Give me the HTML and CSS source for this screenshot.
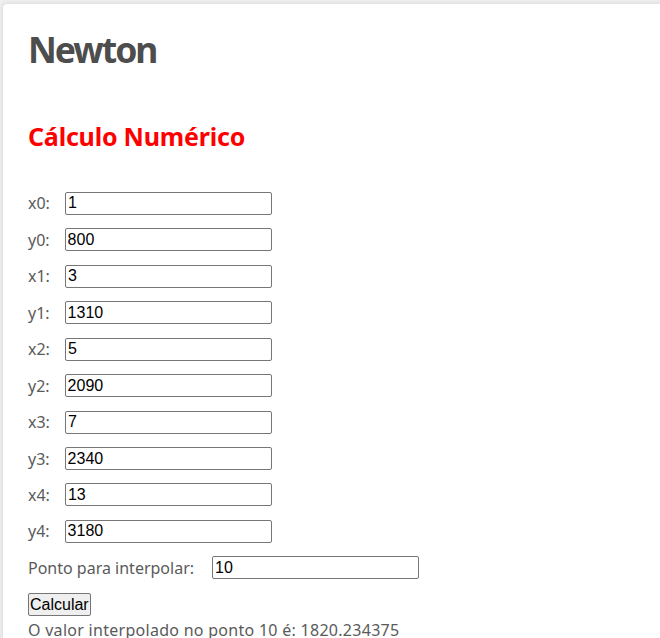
FILE: index.html
```html
<!DOCTYPE html>
<html lang="pt">
<head>
<meta charset="utf-8">
<title>Newton</title>
<link rel="stylesheet" href="styles.css">
</head>
<body>
<div class="card">
  <h1 class="title">Newton</h1>
  <h2 class="subtitle">Cálculo Numérico</h2>
  <form class="form">
    <div class="row"><label class="lbl">x0:</label><input class="field" type="text" value="1"></div>
    <div class="row"><label class="lbl">y0:</label><input class="field" type="text" value="800"></div>
    <div class="row"><label class="lbl">x1:</label><input class="field" type="text" value="3"></div>
    <div class="row"><label class="lbl">y1:</label><input class="field" type="text" value="1310"></div>
    <div class="row"><label class="lbl">x2:</label><input class="field" type="text" value="5"></div>
    <div class="row"><label class="lbl">y2:</label><input class="field" type="text" value="2090"></div>
    <div class="row"><label class="lbl">x3:</label><input class="field" type="text" value="7"></div>
    <div class="row"><label class="lbl">y3:</label><input class="field" type="text" value="2340"></div>
    <div class="row"><label class="lbl">x4:</label><input class="field" type="text" value="13"></div>
    <div class="row"><label class="lbl">y4:</label><input class="field" type="text" value="3180"></div>
    <div class="row"><label class="lbl lbl-wide">Ponto para interpolar:</label><input class="field" type="text" value="10"></div>
    <div class="actions"><button class="btn" type="button">Calcular</button></div>
  </form>
  <p class="result">O valor interpolado no ponto 10 é: 1820.234375</p>
</div>
</body>
</html>
```

FILE: styles.css
```css
html, body {
  overflow: hidden;
}
body {
  margin: 0;
  padding: 3px 0 0 2px;
  background: #efefef;
  font-family: "Noto Sans", "Open Sans", sans-serif;
  color: #555;
}
.card {
  width: calc(100% + 10px);
  min-height: 660px;
  background: #fff;
  border: 1px solid #e4e4e4;
  border-radius: 5px;
  box-shadow: 0 0 4px rgba(0,0,0,0.08);
  padding: 22.6px 25px 0 25px;
  box-sizing: border-box;
}
.title {
  margin: 0;
  font-size: 35.5px;
  line-height: 44px;
  letter-spacing: -2px;
  font-weight: 700;
  color: #4d4d4d;
}
.subtitle {
  margin: 50.7px 0 0 0;
  font-size: 25px;
  line-height: 30px;
  letter-spacing: -0.2px;
  font-weight: 700;
  color: #ff0000;
}
.form {
  margin-top: 40.7px;
}
.row {
  display: flex;
  align-items: center;
  height: 23px;
  margin-bottom: 13.45px;
}
.lbl {
  font-size: 16px;
  margin-right: 15px;
  color: #5a5a5a;
}
.lbl-wide {
  margin-right: 18px;
}
.field {
  box-sizing: border-box;
  width: 207px;
  height: 23px;
  padding: 1px 2px;
  border: 1px solid #767676;
  border-radius: 2px;
  font-family: "Liberation Sans", Arial, sans-serif;
  font-size: 16px;
  color: #000;
  background: #fff;
  outline: none;
}
.actions {
  height: 23px;
}
.btn {
  box-sizing: border-box;
  height: 23px;
  padding: 0 1px;
  border: 1px solid #767676;
  border-radius: 2px;
  background: #efefef;
  font-family: "Liberation Sans", Arial, sans-serif;
  font-size: 16px;
  color: #000;
}
.result {
  margin: 3px 0 0 0;
  font-size: 16px;
  line-height: 22px;
  letter-spacing: 0.28px;
  color: #5a5a5a;
}
```
